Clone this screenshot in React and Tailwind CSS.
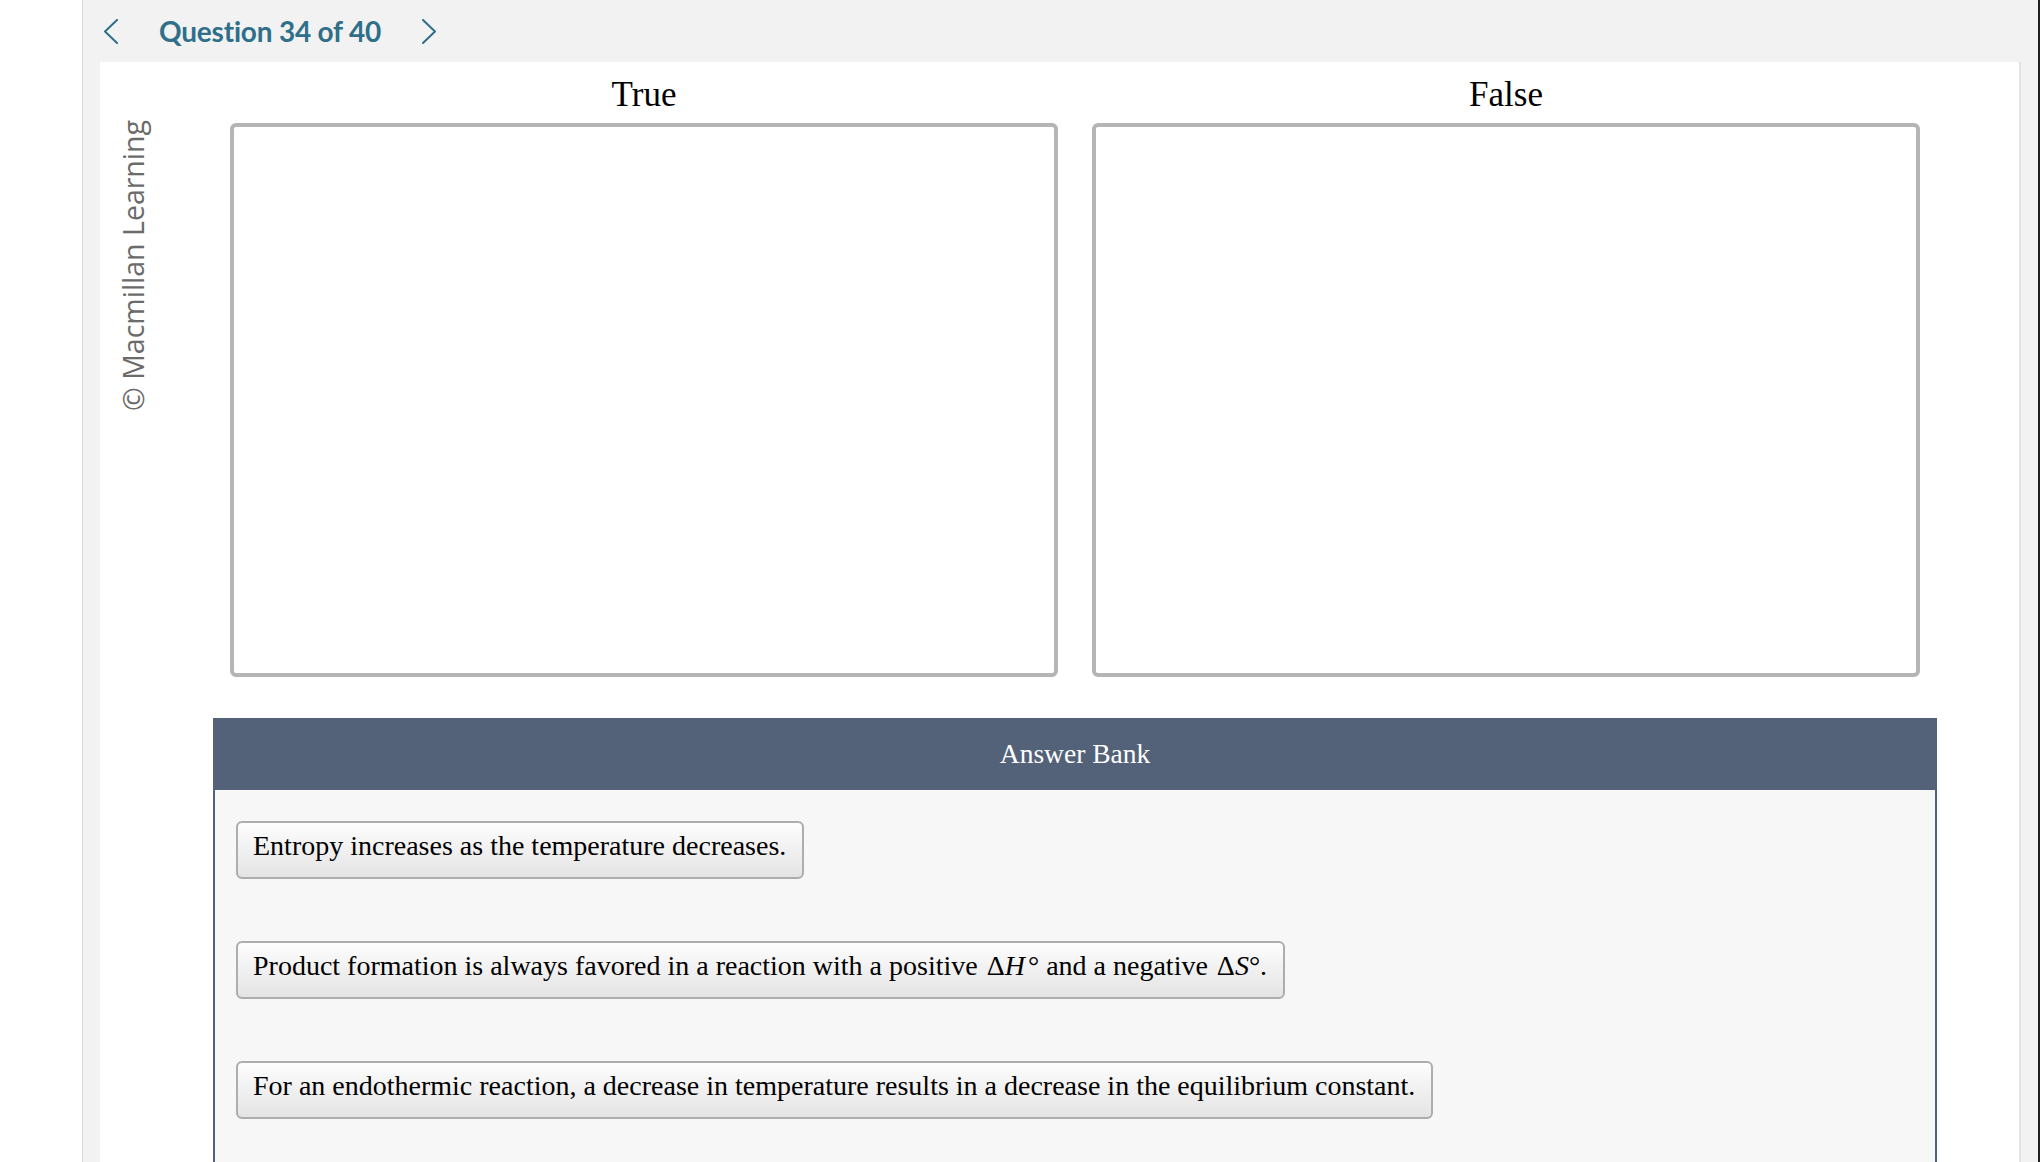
import React from 'react';

const TEAL = '#2f6f89';

function Chevron({ dir }) {
  const pts = dir === 'left' ? '14,1 2,12.5 14,24' : '2,1 14,12.5 2,24';
  return (
    <svg width="16" height="25" viewBox="0 0 16 25" className="shrink-0">
      <polyline points={pts} fill="none" stroke={TEAL} strokeWidth="2" strokeLinecap="round" strokeLinejoin="round" />
    </svg>
  );
}

function DropBox({ label }) {
  return (
    <div className="flex flex-col">
      <div className="pt-[13px] text-center font-['Liberation_Serif',serif] text-[35px] leading-[40px] text-black">
        {label}
      </div>
      <div className="mt-[8px] h-[554px] rounded-[6px] border-[4px] border-[#b5b5b5] bg-white" />
    </div>
  );
}

function Card({ children }) {
  return (
    <div className="flex h-[58px] items-center rounded-[6px] border-2 border-[#adadad] bg-linear-to-b from-[#fdfdfd] to-[#e4e4e4] pb-[8px] pl-[15px] pr-[16px] font-['Liberation_Serif',serif] text-[28px] leading-[30px] text-black whitespace-nowrap">
      {children}
    </div>
  );
}

export default function App() {
  return (
    <div className="flex h-[1162px] w-[2040px] overflow-hidden bg-white">
      <div className="w-[82px] shrink-0 bg-white" />

      <div className="flex min-w-0 flex-1 flex-col border-l border-[#dadada] bg-[#f2f2f2]">
        {/* header */}
        <div className="flex h-[62px] shrink-0 items-center pl-[20px]">
          <Chevron dir="left" />
          <span className="ml-[40px] font-['Lato',sans-serif] text-[28px] font-bold tracking-[-0.2px] text-[#2f6f89]">
            Question 34 of 40
          </span>
          <span className="ml-[40px]">
            <Chevron dir="right" />
          </span>
        </div>

        <div className="flex min-h-0 flex-1 pl-[17px]">
          <div className="flex w-[1921px] shrink-0 border-r-2 border-[#e3e3e3] bg-white">
            {/* copyright gutter */}
            <div className="w-[113px] shrink-0 pl-[18px] pt-[58px]">
              <div className="rotate-180 font-['Open_Sans',sans-serif] text-[28.5px] leading-[30px] text-[#6b6b6b] whitespace-nowrap [writing-mode:vertical-rl] [text-orientation:sideways]">
                © Macmillan Learning
              </div>
            </div>

            {/* content */}
            <div className="flex w-[1724px] shrink-0 flex-col">
              <div className="grid grid-cols-2 gap-x-[34px] px-[17px]">
                <DropBox label="True" />
                <DropBox label="False" />
              </div>

              <div className="mt-[41px] flex min-h-0 flex-1 flex-col">
                <div className="h-[72px] bg-[#536279] text-center font-['Liberation_Serif',serif] text-[27.5px] leading-[72px] text-white">
                  Answer Bank
                </div>
                <div className="flex flex-1 flex-col items-start gap-[62px] border-x-2 border-[#536279] bg-[#f7f7f7] px-[21px] pt-[31px]">
                  <Card>Entropy increases as the temperature decreases.</Card>
                  <Card>
                    Product formation is always favored in a reaction with a positive&nbsp;
                    <span className="ml-[2px]">Δ</span>
                    <i>H</i>
                    <span className="ml-[3px]">°</span>
                    &nbsp;and a negative&nbsp;
                    <span className="ml-[2px]">Δ</span>
                    <i>S</i>
                    <span>°</span>.
                  </Card>
                  <Card>
                    For an endothermic reaction, a decrease in temperature results in a decrease in the equilibrium constant.
                  </Card>
                </div>
              </div>
            </div>
          </div>
        </div>
      </div>

      <div className="w-[2px] shrink-0 bg-[#1f1f1f]" />
    </div>
  );
}
